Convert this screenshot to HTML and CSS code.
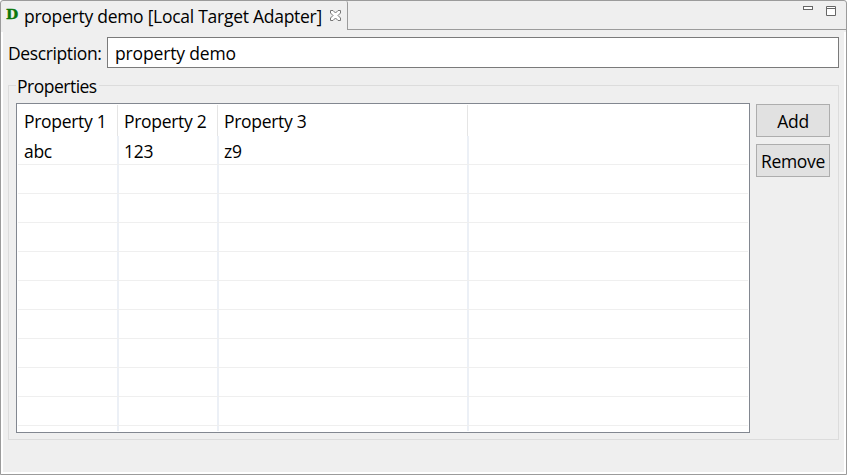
FILE: index.html
```html
<!DOCTYPE html>
<html lang="en">
<head>
<meta charset="utf-8">
<title>property demo</title>
<link rel="stylesheet" href="styles.css">
</head>
<body>
<main class="window">
  <header class="tabbar">
    <div class="tab">
      <span class="logo"><span class="logo-letter">D</span></span>
      <span class="title"><span class="t-title">property demo [Local Target Adapter]</span></span>
      <svg class="close" width="11" height="11" viewBox="0 0 11 11"><path d="M.5 .5H3L5.5 3L8 .5H10.500V3L8 5.500L10.500 8V10.500H8L5.500 8L3 10.500H.5V8L3 5.500L.5 3Z" fill="#fff" stroke="#777"/></svg>
    </div>
    <div class="controls">
      <svg width="10" height="4" viewBox="0 0 10 4"><rect x=".5" y=".5" width="9" height="3" fill="#fff" stroke="#666"/></svg>
      <svg width="10" height="10" viewBox="0 0 10 10"><path d="M.5 .5H9.500V9.500H.5ZM.5 2.500H9.500" fill="#fff" stroke="#666"/></svg>
    </div>
  </header>
  <section class="content">
    <div class="field">
      <label class="label"><span class="t-desc">Description:</span></label>
      <div class="input"><span class="t-input">property demo</span></div>
    </div>
    <fieldset class="group">
      <legend><span class="t-group">Properties</span></legend>
      <div class="table">
        <div class="row head"><span><b>Property 1</b></span><span><b>Property 2</b></span><span><b>Property 3</b></span><span></span></div>
        <div class="row first"><span>abc</span><span>123</span><span>z9</span><span></span></div>
        <div class="row"><span></span><span></span><span></span><span></span></div>
        <div class="row"><span></span><span></span><span></span><span></span></div>
        <div class="row"><span></span><span></span><span></span><span></span></div>
        <div class="row"><span></span><span></span><span></span><span></span></div>
        <div class="row"><span></span><span></span><span></span><span></span></div>
        <div class="row"><span></span><span></span><span></span><span></span></div>
        <div class="row"><span></span><span></span><span></span><span></span></div>
        <div class="row"><span></span><span></span><span></span><span></span></div>
        <div class="row"><span></span><span></span><span></span><span></span></div>
        <div class="row last"><span></span><span></span><span></span><span></span></div>
      </div>
      <div class="buttons"><button>Add</button><button class="t-remove">Remove</button></div>
    </fieldset>
  </section>
</main>
</body>
</html>
```
FILE: styles.css
```css
* { box-sizing: border-box; }
body { margin: 0; background: #fff; }
.window {
  width: 847px; height: 475px; overflow: hidden;
  display: flex; flex-direction: column;
  border: 1px solid #9b9b9b; border-radius: 3px 3px 0 0;
  background: #efefef; color: #000;
  font: 17.5px/24px "Open Sans", "Noto Sans", sans-serif;
  letter-spacing: -0.3px; white-space: nowrap;
}
.tabbar { display: flex; height: 31px; flex: none; }
.tab {
  display: flex; width: 347px; height: 29px; padding-left: 5px;
  border-right: 1px solid #9b9b9b; border-top-right-radius: 2px;
}
.logo { width: 18px; padding-top: 2px; font: bold 13px/24px "DejaVu Serif", serif; color: #0b770b; }
.logo-letter { display: inline-block; transform: scaleX(1.08); transform-origin: left; -webkit-text-stroke: 0.4px #0b770b; }
.title { width: 306px; padding-top: 3px; letter-spacing: -0.27px; }
.close { margin-top: 9px; flex: none; }
.controls {
  flex: 1; height: 29px; display: flex; justify-content: flex-end; gap: 13px;
  padding: 5px 10px 0 0; border-bottom: 1px solid #9b9b9b;
}
.content {
  flex: 1; display: flex; flex-direction: column;
  padding: 5px 5px 0; border: 2px solid #fff; border-top: 0;
}
.field { display: flex; height: 31px; margin-top: 0; flex: none; }
.label { width: 99px; padding-top: 4px; letter-spacing: -0.38px; }
.input { flex: 1; padding: 3px 0 0 7px; border: 1px solid #7a7a7a; background: #fff; letter-spacing: -0.15px; }
.group {
  display: flex; gap: 6px; height: 366px; min-width: 0;
  margin: 6px 0 0; padding: 6px 8px 6px 7px; border: 1px solid #dcdcdc;
}
.group legend { height: 23px; padding: 0 2px 0 1px; margin: 0; letter-spacing: -0.5px; }
.table {
  width: 734px; height: 330px; padding: 1px; flex: none;
  border: 1px solid #828790; background: #fff; overflow: hidden;
}
.row { display: grid; grid-template-columns: 101px 100px 250px 1fr; height: 29px; border-bottom: 1px solid #efefef; }
.row span { padding-left: 5px; border-right: 2px solid #ecf0f6; }
.row span:first-child { padding-left: 6px; }
.row span:last-child { border: 0; }
.row.head { grid-template-columns: 100px 100px 250px 1fr; height: 31px; border: 0; }
.row.head span { padding: 4px 0 0 6px; border-right: 1px solid #e5e5e5; }
.row.head span:last-child { border: 0; }
.head b { font-weight: 400; }
.first span { padding-top: 3px; }
.row.last { height: 5px; border: 0; }
.buttons { display: flex; flex-direction: column; gap: 7px; padding-top: 1px; }
.buttons button {
  width: 74px; height: 33px; padding: 0; border: 1px solid #adadad;
  background: #e1e1e1; color: #000; font: inherit; letter-spacing: inherit;
}
```
